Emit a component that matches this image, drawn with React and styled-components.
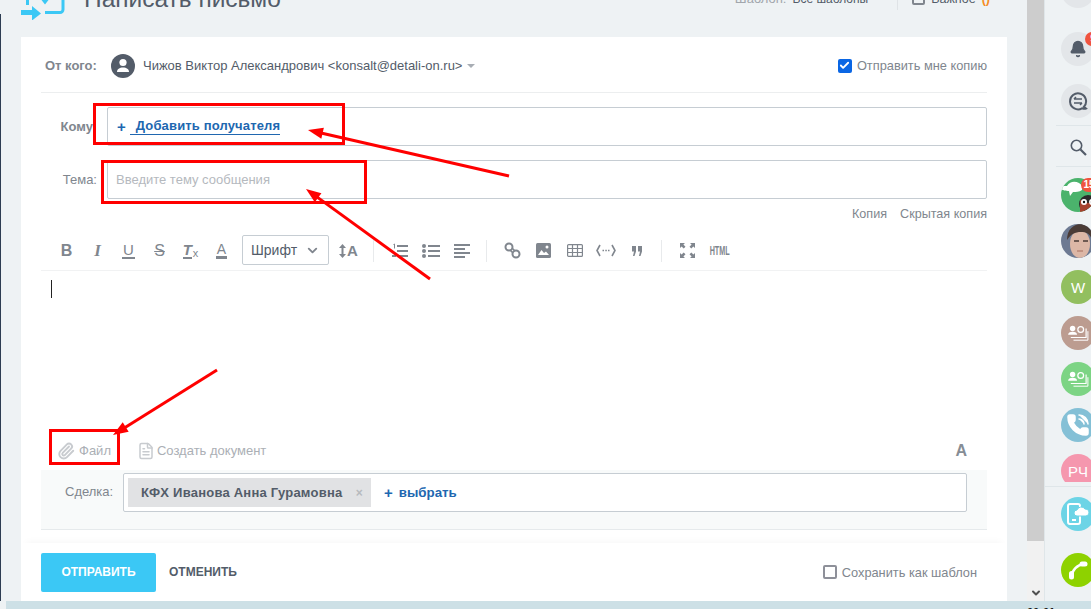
import React from "react";
import styled, { createGlobalStyle } from "styled-components";
import { Bell, ChevronDown, Check, Paperclip, FileText, PhoneCall } from "lucide-react";

const GlobalStyle = createGlobalStyle`
  html, body { margin: 0; padding: 0; height: 100%; overflow: hidden; }
  body { font-family: "Liberation Sans", Arial, sans-serif; background: #eef2f4; }
`;

const Page = styled.div`
  position: relative;
  width: 1091px;
  height: 609px;
  overflow: hidden;
  display: flex;
  background: #eef2f4;
`;
const Main = styled.div`
  flex: 0 0 1027px;
  display: flex;
  flex-direction: column;
  padding-left: 21px;
  box-sizing: border-box;
`;
const Header = styled.div`
  width: 986px;
  margin-top: -40px;
  flex: 0 0 77px;
  display: flex;
  align-items: center;
  justify-content: space-between;
`;
const Title = styled.div`display: flex; align-items: center; gap: 19px; font-size: 24.5px; color: #535c69;`;
const HeadRight = styled.div`display: flex; align-items: center; font-size: 12.5px; color: #535c69; padding-right: 17px;`;
const Dim = styled.span`color: #a1a6ac; margin-right: 6px; font-size: 13px;`;
const TplName = styled.span`font-size: 12px;`;
const HeadSep = styled.span`width: 1px; height: 22px; background: #dfe3e6; margin: 0 14px 0 29px;`;
const SmallBox = styled.span`width: 9px; height: 9px; border: 2px solid #80868e; border-radius: 2px; margin-right: 6px;`;
const Flame = styled.span`color: #f58c1f; margin-left: 6px; font-weight: bold;`;

const Card = styled.div`
  width: 986px;
  height: 564px;
  background: #fff;
  display: flex;
  flex-direction: column;
`;
const Form = styled.div`padding: 0 20px; flex: 1; display: flex; flex-direction: column;`;
const FromRow = styled.div`
  flex: 0 0 56px;
  box-sizing: border-box;
  display: flex;
  align-items: center;
  border-bottom: 1px solid #eceeef;
  padding: 2px 0 0 4px;
  font-size: 13px;
  color: #535c69;
`;
const FromLabel = styled.span`font-weight: bold; color: #80868e; width: 66px;`;
const Avatar = styled.span`
  width: 24px; height: 24px; border-radius: 50%; background: #535c69;
  display: flex; align-items: center; justify-content: center; margin-right: 8px;
`;
const Caret = styled.span`
  width: 0; height: 0; border: 4px solid transparent; border-top: 4px solid #a8adb4; border-bottom: 0; margin-left: 5px;
`;
const CopyWrap = styled.label`margin-left: auto; display: flex; align-items: center; gap: 5px; color: #80868e; font-size: 12.8px;`;
const CheckBox = styled.span`
  width: 14px; height: 14px; border-radius: 2px; box-sizing: border-box;
  display: flex; align-items: center; justify-content: center;
  background: ${(p) => (p.$on ? "#0a66e4" : "#fff")};
  border: ${(p) => (p.$on ? "none" : "2px solid #8e9099")};
`;
const FieldRow = styled.div`
  display: flex;
  align-items: center;
  margin-top: 14px;
`;
const FieldLabel = styled.span`
  width: 66px;
  text-align: right;
  padding-right: ${(p) => p.$pad || 0}px;
  box-sizing: border-box;
  font-size: 13px;
  color: #80868e;
  font-weight: ${(p) => (p.$bold ? "bold" : "normal")};
`;
const Input = styled.div`
  flex: 1;
  height: 39px;
  box-sizing: border-box;
  border: 1px solid #c6cdd3;
  border-radius: 2px;
  display: flex;
  align-items: center;
  padding-left: 8px;
  font-size: 13px;
  color: #b5b9be;
`;
const Plus = styled.span`color: #2067b0; font-weight: bold; font-size: 15px; margin: 0 ${(p) => p.$gap}px 0 ${(p) => p.$left || 0}px;`;
const AddLink = styled.span`
  color: #2067b0; font-weight: bold; font-size: 13px; letter-spacing: 0.15px;
  border-bottom: 1px solid #2067b0; padding: 0 0 1px 6px; margin-left: -6px;
`;
const CopyLinks = styled.div`
  display: flex; justify-content: flex-end; gap: 13px; font-size: 12.6px; color: #80868e; margin-top: 8px; height: 14px;
`;
const Toolbar = styled.div`
  flex: 0 0 41px;
  margin-top: 9px;
  display: flex;
  align-items: center;
  border-bottom: 1px solid #f1f2f3;
  padding: 1px 0 0 10px;
  color: #80868e;
  box-sizing: border-box;
`;
const Tool = styled.span`
  flex: 0 0 31px;
  display: flex;
  align-items: center;
  justify-content: center;
  font-size: 16px;
  font-weight: bold;
  line-height: 1;
`;
const ItalicGlyph = styled.span`font-family: "Liberation Serif", serif; font-style: italic; font-size: 17px;`;
const UnderGlyph = styled.span`font-size: 15px; font-weight: normal; border-bottom: 2px solid #80868e; padding: 0 1px;`;
const StrikeGlyph = styled.span`font-size: 16px; font-weight: normal; text-decoration: line-through;`;
const ClearGlyph = styled.span`font-style: italic; font-size: 15px; border-bottom: 2px solid #80868e; line-height: 14px;`;
const ClearX = styled.span`font-size: 11px; font-weight: normal; align-self: flex-end; margin-left: 1px;`;
const ColorGlyph = styled.span`font-size: 14px; font-weight: normal; border-bottom: 3px solid #80868e; padding: 0 1px; line-height: 14px;`;
const SizeGlyph = styled.span`font-size: 15px; display: flex; align-items: center; gap: 1px;`;
const FontSelect = styled.div`
  flex: 0 0 87px; height: 30px; box-sizing: border-box;
  border: 1px solid #c6cdd3; border-radius: 2px;
  display: flex; align-items: center; justify-content: space-between;
  padding: 0 8px 0 8px; margin: -1px 4px 0 5px;
  font-size: 14px; color: #535c69;
`;
const ToolSep = styled.span`flex: 0 0 1px; height: 22px; background: #e8eaec; margin: 0 10px 0 9px;`;
const HtmlTool = styled.span`
  flex: 0 0 31px; text-align: center; font-size: 12px; font-weight: bold; color: #80868e; transform: scaleX(.6);
`;
const Editor = styled.div`flex: 1; padding: 9px 11px 0 10px;`;
const CaretLine = styled.span`display: block; width: 1px; height: 18px; background: #222;`;
const AttachRow = styled.div`
  flex: 0 0 30px; box-sizing: border-box; display: flex; align-items: center; padding: 0 20px 9px 16px;
  font-size: 13px; color: #abafb5;
`;
const AttachItem = styled.span`display: flex; align-items: center; gap: ${(p) => p.$g}px; margin-right: ${(p) => p.$gap || 0}px;`;
const FontA = styled.span`margin-left: auto; font-weight: bold; font-size: 16px; color: #868d95;`;
const DealRow = styled.div`
  flex: 0 0 60px; background: #f8fafa; border-bottom: 1px solid #e6eaec;
  display: flex; align-items: flex-start; padding: 3px 20px 0 24px; box-sizing: border-box;
  font-size: 13px; color: #80868e;
`;
const DealLabel = styled.span`width: 58px; line-height: 38px;`;
const DealInput = styled.div`
  flex: 1; height: 39px; box-sizing: border-box; background: #fff;
  border: 1px solid #c6cdd3; border-radius: 2px;
  display: flex; align-items: center; padding-left: 4px;
`;
const Chip = styled.span`
  height: 29px; width: 243px; box-sizing: border-box; background: #e1e2e4;
  display: flex; align-items: center; justify-content: space-between;
  padding: 0 8px 0 13px; color: #535c69; font-weight: bold; font-size: 13px; letter-spacing: 0.23px;
`;
const ChipX = styled.span`color: #b7babe; font-size: 12px; font-weight: bold;`;
const Pick = styled.span`color: #2067b0; font-weight: bold; font-size: 13.3px; margin-left: 13px; display: flex; align-items: center;`;
const Footer = styled.div`
  flex: 0 0 58px;
  margin-top: 13px;
  display: flex;
  align-items: center;
  padding: 0 30px 0 20px;
  box-shadow: 0 -6px 8px -6px rgba(0,0,0,.05);
`;
const SendBtn = styled.button`
  width: 115px; height: 39px; background: #3bc8f5; border: 0; border-radius: 2px;
  color: #fff; font: bold 12px "Liberation Sans", sans-serif; margin-right: 13px;
`;
const CancelBtn = styled.span`font-weight: bold; font-size: 12px; color: #535c69;`;
const SaveTpl = styled.label`margin-left: auto; display: flex; align-items: center; gap: 5px; font-size: 12.8px; color: #80868e;`;

const Scroll = styled.div`
  flex: 0 0 17px;
  height: 601px;
  display: flex;
  flex-direction: column;
  background: #f1f1f1;
`;
const Thumb = styled.div`height: 541px; background: #cdcdcd;`;
const ScrollArrow = styled.div`margin-top: auto; margin-bottom: 2px; display: flex; justify-content: center;`;

const Side = styled.div`
  flex: 1;
  min-width: 0;
  border-left: 1px solid #dfe6e9;
  display: flex;
  flex-direction: column;
  padding-left: 16px;
`;
const Round = styled.div`
  flex: 0 0 34px;
  width: 34px;
  height: 34px;
  border-radius: 50%;
  background: ${(p) => p.$bg};
  color: #fff;
  display: flex;
  align-items: center;
  justify-content: center;
  margin-top: ${(p) => p.$top}px;
  position: relative;
  font-size: 15px;
`;
const Badge = styled.span`
  position: absolute; top: 0; left: ${(p) => p.$left}px; min-width: 14px; height: 14px; border-radius: 7px;
  background: #f0533e; color: #fff; font-size: 10px; font-weight: bold; line-height: 14px; text-align: center; padding: 0 1px;
`;
const SideLine = styled.div`flex: 0 0 1px; background: #dfe6e9; margin: ${(p) => p.$m};`;
const Contacts = styled.div`
  flex: 0 0 315px;
  margin-left: -16px;
  padding-left: 16px;
  overflow: hidden;
  display: flex;
  flex-direction: column;
`;
const Photo = styled.svg`border-radius: 50%; display: block;`;
const Bottom = styled.div`
  position: absolute; left: 6px; right: 0; bottom: 0; height: 8px; background: #cde0e6; overflow: hidden;
`;
const Clock = styled.span`
  position: absolute; left: 1021px; top: 5px; font-size: 11px; font-weight: bold; color: #111;
`;
const LeftEdge = styled.div`
  position: absolute; left: 0; top: 14px; bottom: 8px; width: 1px; background: #2d3d52;
`;
const Mark = styled.div`
  position: absolute;
  left: ${(p) => p.$x}px; top: ${(p) => p.$y}px; width: ${(p) => p.$w}px; height: ${(p) => p.$h}px;
  box-sizing: border-box;
  border: 3px solid #f00;
`;
const Overlay = styled.svg`position: absolute; left: 0; top: 0; pointer-events: none;`;

const Arrow = ({ from, to }) => {
  const [x1, y1] = from;
  const [x2, y2] = to;
  const a = Math.atan2(y2 - y1, x2 - x1);
  const len = 16;
  const wing = 0.36;
  const p1 = [x2 - len * Math.cos(a - wing), y2 - len * Math.sin(a - wing)];
  const p2 = [x2 - len * Math.cos(a + wing), y2 - len * Math.sin(a + wing)];
  return (
    <g>
      <line x1={x1} y1={y1} x2={x2 - 10 * Math.cos(a)} y2={y2 - 10 * Math.sin(a)} stroke="#f00" strokeWidth="3" />
      <polygon points={`${x2},${y2} ${p1[0]},${p1[1]} ${p2[0]},${p2[1]}`} fill="#f00" />
    </g>
  );
};

const ContactCard = () => (
  <svg width="22" height="18" viewBox="0 0 24 20" fill="none" stroke="#fff">
    <circle cx="6" cy="5" r="3" fill="#fff" stroke="none" />
    <path d="M1 12c0-2.500 2-3.500 5-3.500s5 1 5 3.500z" fill="#fff" stroke="none" />
    <circle cx="15" cy="6" r="3.200" strokeWidth="1.400" />
    <path d="M4 15h17V5" strokeWidth="1.300" />
    <path d="M7 18h16V8" strokeWidth="1.100" />
  </svg>
);

const App = () => (
  <Page>
    <GlobalStyle />
    <LeftEdge />
    <Main>
      <Header>
        <Title>
          <svg width="44" height="43" viewBox="0 -23 44 43" fill="none" stroke="#3bc8f5" strokeWidth="3">
            <path d="M6.500 -6V5" />
            <path d="M24 12.500H39a3 3 0 0 0 3-3V-6" />
            <path d="M20 -3l4 5 4-5" />
            <path d="M0 12.500h12" strokeWidth="5" />
            <path d="M11 6l9 7.500-9 7z" fill="#3bc8f5" stroke="none" />
          </svg>
          Написать письмо
        </Title>
        <HeadRight>
          <Dim>Шаблон:</Dim><TplName>Все шаблоны</TplName>
          <HeadSep />
          <SmallBox />Важное<Flame>()</Flame>
        </HeadRight>
      </Header>
      <Card>
        <Form>
          <FromRow>
            <FromLabel>От кого:</FromLabel>
            <Avatar>
              <svg width="14" height="15" viewBox="0 0 14 15" fill="#fff">
                <circle cx="7" cy="4.500" r="3.600" />
                <path d="M1 14c0-3 2.500-4.500 6-4.500s6 1.500 6 4.500z" />
              </svg>
            </Avatar>
            Чижов Виктор Александрович &lt;konsalt@detali-on.ru&gt;
            <Caret />
            <CopyWrap>
              <CheckBox $on><Check size={11} color="#fff" strokeWidth={4} /></CheckBox>
              Отправить мне копию
            </CopyWrap>
          </FromRow>
          <FieldRow>
            <FieldLabel $bold $pad={14}>Кому</FieldLabel>
            <Input>
              <Plus $gap={10} $left={1}>+</Plus>
              <AddLink>Добавить получателя</AddLink>
            </Input>
          </FieldRow>
          <FieldRow>
            <FieldLabel $pad={10}>Тема:</FieldLabel>
            <Input>Введите тему сообщения</Input>
          </FieldRow>
          <CopyLinks><span>Копия</span><span>Скрытая копия</span></CopyLinks>
          <Toolbar>
            <Tool>B</Tool>
            <Tool><ItalicGlyph>I</ItalicGlyph></Tool>
            <Tool><UnderGlyph>U</UnderGlyph></Tool>
            <Tool><StrikeGlyph>S</StrikeGlyph></Tool>
            <Tool><ClearGlyph>T</ClearGlyph><ClearX>x</ClearX></Tool>
            <Tool><ColorGlyph>A</ColorGlyph></Tool>
            <FontSelect>Шрифт<ChevronDown size={15} strokeWidth={3} color="#80868e" /></FontSelect>
            <Tool>
              <SizeGlyph>
                <svg width="7" height="14" viewBox="0 0 7 14" fill="currentColor">
                  <path d="M3.500 0L7 4H4.500v6H7l-3.500 4L0 10h2.500V4H0z" />
                </svg>
                A
              </SizeGlyph>
            </Tool>
            <ToolSep />
            <Tool>
              <svg width="16" height="16" viewBox="0 0 16 16" fill="currentColor">
                <path d="M1 1.500l2-1v5H2V2zM5 2h11v2H5zM5 7h11v2H5zM5 12h11v2H5zM0 12h4v2H0z" />
              </svg>
            </Tool>
            <Tool>
              <svg width="18" height="14" viewBox="0 0 18 14" fill="currentColor">
                <circle cx="2" cy="2" r="2" /><circle cx="2" cy="7" r="2" /><circle cx="2" cy="12" r="2" />
                <path d="M6 1h12v2H6zM6 6h12v2H6zM6 11h12v2H6z" />
              </svg>
            </Tool>
            <Tool>
              <svg width="16" height="14" viewBox="0 0 16 14" fill="currentColor">
                <path d="M0 0h16v2H0zM0 4h11v2H0zM0 8h16v2H0zM0 12h11v2H0z" />
              </svg>
            </Tool>
            <ToolSep />
            <Tool>
              <svg width="17" height="17" viewBox="0 0 17 17" fill="none" stroke="currentColor" strokeWidth="2">
                <circle cx="5" cy="5" r="3.500" /><circle cx="12" cy="12" r="3.500" />
                <path d="M6.500 8.500l2 2M8.500 6.500l2 2" strokeWidth="1.500" />
              </svg>
            </Tool>
            <Tool>
              <svg width="15" height="15" viewBox="0 0 15 15">
                <rect width="15" height="15" rx="1.500" fill="currentColor" />
                <path d="M2 12l3.500-5 2.500 3 2-1.500 3 3.500z" fill="#fff" />
                <circle cx="11" cy="4" r="1.500" fill="#fff" />
              </svg>
            </Tool>
            <Tool>
              <svg width="16" height="13" viewBox="0 0 16 13" fill="none" stroke="currentColor" strokeWidth="1.200">
                <rect x=".6" y=".6" width="14.800" height="11.800" rx="1" />
                <path d="M.6 4.500h14.800M.6 8.500h14.800M5.500 .6v11.800M10.500 .6v11.800" />
              </svg>
            </Tool>
            <Tool>
              <svg width="20" height="13" viewBox="0 0 20 13" fill="none" stroke="currentColor" strokeWidth="1.600">
                <path d="M4 1L1 6.500 4 12M16 1l3 5.500-3 5.500" />
                <path d="M6.500 6.500h1.500M9.300 6.500h1.500M12 6.500h1.500" />
              </svg>
            </Tool>
            <Tool>
              <svg width="10" height="10" viewBox="0 0 10 10" fill="currentColor">
                <path d="M0 0h4v5.500L2.500 10H1l1-4.500H0zM6 0h4v5.500L8.500 10H7l1-4.500H6z" />
              </svg>
            </Tool>
            <ToolSep />
            <Tool>
              <svg width="15" height="15" viewBox="0 0 15 15" fill="currentColor">
                <path d="M0 0h5L3.400 1.600 5.500 3.700 3.700 5.500 1.600 3.400 0 5zM15 0v5l-1.600-1.600-2.100 2.100-1.800-1.800 2.100-2.100L10 0zM0 15v-5l1.600 1.600 2.100-2.100 1.800 1.800-2.100 2.100L5 15zM15 15h-5l1.600-1.600-2.100-2.100 1.800-1.800 2.100 2.100L15 10z" />
              </svg>
            </Tool>
            <HtmlTool>HTML</HtmlTool>
          </Toolbar>
          <Editor><CaretLine /></Editor>
          <AttachRow>
            <AttachItem $g={4} $gap={26}><Paperclip size={18} strokeWidth={2.5} color="#c8cbcf" />Файл</AttachItem>
            <AttachItem $g={2}><FileText size={18} color="#c8cbcf" />Создать документ</AttachItem>
            <FontA>A</FontA>
          </AttachRow>
          <DealRow>
            <DealLabel>Сделка:</DealLabel>
            <DealInput>
              <Chip>КФХ Иванова Анна Гурамовна<ChipX>×</ChipX></Chip>
              <Pick><Plus $gap={6}>+</Plus>выбрать</Pick>
            </DealInput>
          </DealRow>
        </Form>
        <Footer>
          <SendBtn>ОТПРАВИТЬ</SendBtn>
          <CancelBtn>ОТМЕНИТЬ</CancelBtn>
          <SaveTpl><CheckBox />Сохранить как шаблон</SaveTpl>
        </Footer>
      </Card>
    </Main>
    <Scroll>
      <Thumb />
      <ScrollArrow><ChevronDown size={12} strokeWidth={4} color="#505050" /></ScrollArrow>
    </Scroll>
    <Side>
      <Round $bg="#e3e6e9" $top={-26} />
      <Round $bg="#e3e6e9" $top={24}><Bell size={18} fill="#535c69" color="#535c69" /><Badge $left={24}>9</Badge></Round>
      <Round $bg="#e3e6e9" $top={18}>
        <svg width="20" height="19" viewBox="0 0 20 19" fill="none" stroke="#535c69" strokeWidth="2">
          <path d="M18 16.500l-2-1.800A8 8 0 1 0 14 16.300c1.500.5 3 .6 4 .2z" />
          <path d="M6 7h8M6 7l2-2M14 11H6M14 11l-2 2" strokeWidth="1.500" />
        </svg>
      </Round>
      <SideLine $m="7px 0 0 -5px" />
      <Round $bg="transparent" $top={4}>
        <svg width="17" height="17" viewBox="0 0 17 17" fill="none" stroke="#535c69">
          <circle cx="6.500" cy="6.500" r="5.200" strokeWidth="1.600" />
          <path d="M10.500 10.500l5.500 5.500" strokeWidth="2.200" />
        </svg>
      </Round>
      <SideLine $m="2px 0 0 -5px" />
      <Contacts>
        <Round $bg="#4bb36c" $top={11}>
          <Photo width="34" height="34" viewBox="0 0 34 34">
            <path d="M0 8h6C9 3 14 3 18 5c3 2 4 4 3 7-3 2-6 2-9 2l-3 4-1-5C5 13 1 12 0 11z" fill="#fff" />
            <circle cx="27" cy="26" r="9" fill="#2b2b2b" />
            <path d="M19 22l8 3 8-3v12H19z" fill="#a5432f" />
            <circle cx="23" cy="24" r="3" fill="#fff" />
            <circle cx="31" cy="24" r="3" fill="#fff" />
            <circle cx="23" cy="24" r="1.200" fill="#111" />
            <circle cx="31" cy="24" r="1.200" fill="#111" />
          </Photo>
          <Badge $left={20}>15</Badge>
        </Round>
        <Round $bg="#6d7a92" $top={12}>
          <Photo width="34" height="34" viewBox="0 0 34 34">
            <ellipse cx="19" cy="20" rx="10" ry="14" fill="#dcb7a6" />
            <path d="M6 16C6 5 13 0 20 0s12 6 11 16c-2-6-5-8-11-8s-10 2-14 8z" fill="#4a3b36" />
            <path d="M13 17h5M22 17h5" stroke="#4a3b36" strokeWidth="1.500" />
            <path d="M16 27h6" stroke="#a8705f" strokeWidth="1.200" />
          </Photo>
        </Round>
        <Round $bg="#92bf5f" $top={12}>W</Round>
        <Round $bg="#bc9c90" $top={12}><ContactCard /></Round>
        <Round $bg="#7cd484" $top={12}><ContactCard /></Round>
        <Round $bg="#84c0d6" $top={12}><PhoneCall size={24} fill="#fff" strokeWidth={1.5} /></Round>
        <Round $bg="#f597ae" $top={12}>РЧ</Round>
      </Contacts>
      <SideLine $m="4px 0 0 -16px" />
      <Round $bg="#6cd4e6" $top={10}>
        <svg width="24" height="24" viewBox="0 0 24 24" fill="none">
          <rect x="2" y="2" width="12" height="20" rx="2" stroke="#fff" strokeWidth="2" />
          <path d="M11 14a3 3 0 0 1 0-6 4.500 4.500 0 0 1 8-1 3.500 3.500 0 0 1 1 7z" fill="#fff" stroke="#6cd4e6" />
          <path d="M6 18h4" stroke="#fff" strokeWidth="2" />
        </svg>
      </Round>
      <Round $bg="#8ed200" $top={22}>
        <svg width="20" height="20" viewBox="0 0 20 20" fill="none" stroke="#fff" strokeLinecap="round">
          <path d="M4 16C4 10 9 5 16 4" strokeWidth="2.500" />
          <path d="M3.500 13.500v3.500" strokeWidth="5" />
          <path d="M14 4h3" strokeWidth="5" />
        </svg>
      </Round>
    </Side>
    <Bottom><Clock>00:01</Clock></Bottom>
    <Mark $x={93} $y={103} $w={252} $h={42} />
    <Mark $x={101} $y={160} $w={266} $h={44} />
    <Mark $x={49} $y={429} $w={71} $h={36} />
    <Overlay width="1091" height="609">
      <Arrow from={[509, 176]} to={[308, 130]} />
      <Arrow from={[430, 279]} to={[306, 189]} />
      <Arrow from={[217, 370]} to={[113, 435]} />
    </Overlay>
  </Page>
);

export default App;
